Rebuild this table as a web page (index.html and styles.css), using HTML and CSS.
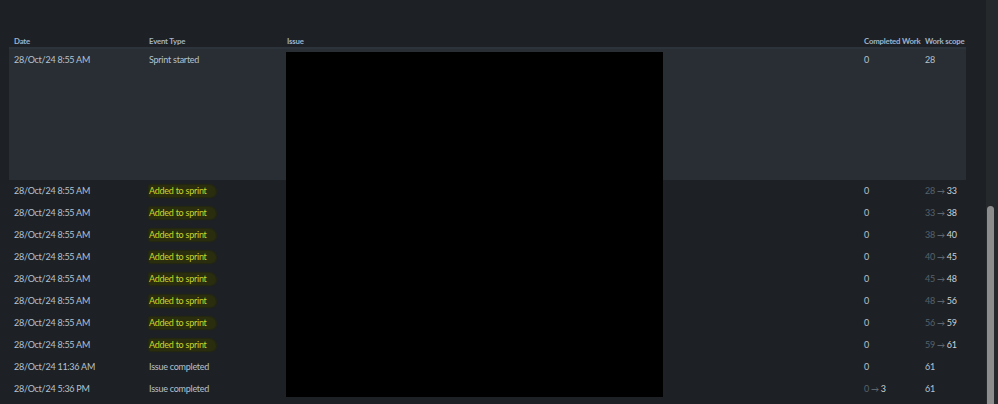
FILE: index.html
```html
<!DOCTYPE html>
<html>
  <head>
    <meta name='viewport' content='width=device-width, initial-scale=1'>
    <title>Sprint Report</title>
    <link rel="stylesheet" href="styles.css">
  </head>
<body>

<div class='report'>
  <div class='row head'>
    <div class='cell'>Date</div>
    <div class='cell'>Event Type</div>
    <div class='cell'>Issue</div>
    <div class='cell'>Completed Work</div>
    <div class='cell'>Work scope</div>
  </div>

  <div class='row first'>
    <div class='cell'>28/Oct/24 8:55 AM</div>
    <div class='cell'>Sprint started</div>
    <div class='cell'></div>
    <div class='cell'>0</div>
    <div class='cell'>28</div>
  </div>

  <div class='row'>
    <div class='cell'>28/Oct/24 8:55 AM</div>
    <div class='cell'><span class='added'>Added to sprint</span></div>
    <div class='cell'></div>
    <div class='cell'>0</div>
    <div class='cell'><span class='was'>28</span> <span class='arrow'>&rarr;</span> <span class='now'>33</span></div>
  </div>
  <div class='row'>
    <div class='cell'>28/Oct/24 8:55 AM</div>
    <div class='cell'><span class='added'>Added to sprint</span></div>
    <div class='cell'></div>
    <div class='cell'>0</div>
    <div class='cell'><span class='was'>33</span> <span class='arrow'>&rarr;</span> <span class='now'>38</span></div>
  </div>
  <div class='row'>
    <div class='cell'>28/Oct/24 8:55 AM</div>
    <div class='cell'><span class='added'>Added to sprint</span></div>
    <div class='cell'></div>
    <div class='cell'>0</div>
    <div class='cell'><span class='was'>38</span> <span class='arrow'>&rarr;</span> <span class='now'>40</span></div>
  </div>
  <div class='row'>
    <div class='cell'>28/Oct/24 8:55 AM</div>
    <div class='cell'><span class='added'>Added to sprint</span></div>
    <div class='cell'></div>
    <div class='cell'>0</div>
    <div class='cell'><span class='was'>40</span> <span class='arrow'>&rarr;</span> <span class='now'>45</span></div>
  </div>
  <div class='row'>
    <div class='cell'>28/Oct/24 8:55 AM</div>
    <div class='cell'><span class='added'>Added to sprint</span></div>
    <div class='cell'></div>
    <div class='cell'>0</div>
    <div class='cell'><span class='was'>45</span> <span class='arrow'>&rarr;</span> <span class='now'>48</span></div>
  </div>
  <div class='row'>
    <div class='cell'>28/Oct/24 8:55 AM</div>
    <div class='cell'><span class='added'>Added to sprint</span></div>
    <div class='cell'></div>
    <div class='cell'>0</div>
    <div class='cell'><span class='was'>48</span> <span class='arrow'>&rarr;</span> <span class='now'>56</span></div>
  </div>
  <div class='row'>
    <div class='cell'>28/Oct/24 8:55 AM</div>
    <div class='cell'><span class='added'>Added to sprint</span></div>
    <div class='cell'></div>
    <div class='cell'>0</div>
    <div class='cell'><span class='was'>56</span> <span class='arrow'>&rarr;</span> <span class='now'>59</span></div>
  </div>
  <div class='row'>
    <div class='cell'>28/Oct/24 8:55 AM</div>
    <div class='cell'><span class='added'>Added to sprint</span></div>
    <div class='cell'></div>
    <div class='cell'>0</div>
    <div class='cell'><span class='was'>59</span> <span class='arrow'>&rarr;</span> <span class='now'>61</span></div>
  </div>
  <div class='row'>
    <div class='cell'>28/Oct/24 11:36 AM</div>
    <div class='cell'>Issue completed</div>
    <div class='cell'></div>
    <div class='cell'>0</div>
    <div class='cell'>61</div>
  </div>
  <div class='row'>
    <div class='cell'>28/Oct/24 5:36 PM</div>
    <div class='cell'>Issue completed</div>
    <div class='cell'></div>
    <div class='cell'><span class='was'>0</span> <span class='arrow'>&rarr;</span> <span class='now'>3</span></div>
    <div class='cell'>61</div>
  </div>

  <!-- issue column blacked out in the screenshot -->
  <div class='redacted'></div>
</div>

<div class='scrollbar'><div class='thumb'></div></div>

</body>
</html>
```

FILE: styles.css
```css
* {font-family: Lato, "Open Sans", sans-serif; box-sizing: border-box;}

body {margin: 0; background-color: #1d2125; color: #b6c2cf; font-size: 9px; letter-spacing: -0.25px; height: 404px; overflow: hidden;}

.report {position: relative; margin: 33px 32px 0 9px; width: 957px;}

.row {display: grid; grid-template-columns: 135px 138px 577px 61px 46px; height: 22px; align-items: center; padding-bottom: 2px;}
.cell {padding-left: 5px; white-space: nowrap;}

.head {height: 16px; border-bottom: 2px solid #2c333a; align-items: end; padding-bottom: 1px;}
.head .cell {font-size: 7.8px; font-weight: 700; color: #9fb3c8; letter-spacing: -0.2px;}

.first {height: 131px; background-color: #282e33; align-items: start; padding: 5px 0 0;}

.added {color: #c9d72c; background: #2a2e0e; padding: 0 9px 1px 0; border-radius: 2px 8px 6px 3px; box-shadow: 0 0 1px 1px #25280f;}

.was {color: #56616c;}
.arrow {color: #6b7681; font-size: 8px;}
.now {color: #c7d1db;}

.redacted {position: absolute; left: 277px; top: 19px; width: 377px; height: 345px; background: #000;}

.scrollbar {position: fixed; top: 0; right: 0; width: 12px; height: 404px; background: #26292c;}
.thumb {position: absolute; left: 1px; top: 206px; width: 7px; height: 220px; background: #8d8d8d; border-radius: 4px;}
```
